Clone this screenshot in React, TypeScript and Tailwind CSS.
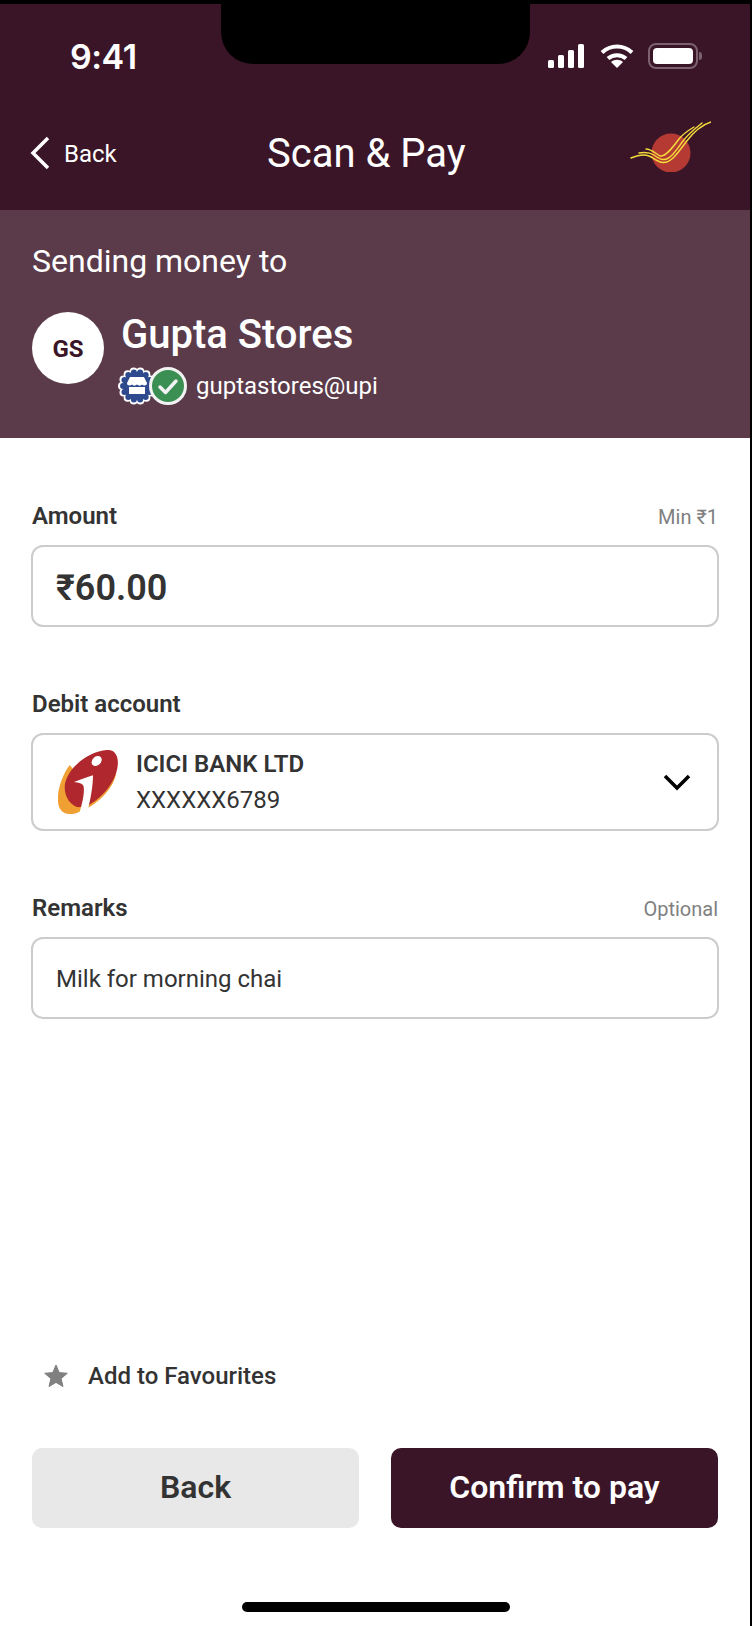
const font = { fontFamily: '"Roboto", sans-serif' }

const scallops = Array.from({ length: 14 }, (_, i) => {
    const a = (i / 14) * Math.PI * 2
    return { x: 19 + Math.cos(a) * 15, y: 19 + Math.sin(a) * 15 }
})

function StatusIcons() {
    return (
        <div className="flex items-center">
            <svg width="36" height="24" viewBox="0 0 36 24" fill="#fff">
                <rect x="0" y="16" width="6" height="8" rx="1.5" />
                <rect x="10" y="11" width="6" height="13" rx="1.5" />
                <rect x="20" y="6" width="6" height="18" rx="1.5" />
                <rect x="30" y="0" width="6" height="24" rx="1.5" />
            </svg>
            <svg className="ml-[16px]" width="34" height="24" viewBox="0 0 34 24" fill="none" stroke="#fff" strokeWidth="4">
                <path d="M2 8.5C10.5 0.5 23.5 0.5 32 8.5" />
                <path d="M8 14.5C13 10 21 10 26 14.5" />
                <path d="M17 24L11 18C14.5 15 19.5 15 23 18Z" fill="#fff" stroke="none" />
            </svg>
            <div className="ml-[14px] flex items-center">
                <div className="w-[50px] h-[26px] rounded-[8px] border-2 border-[#7c6270] p-[3px]">
                    <div className="w-full h-full rounded-[4px] bg-white"></div>
                </div>
                <div className="ml-[1px] w-[3px] h-[8px] rounded-r-full bg-[#7c6270]"></div>
            </div>
        </div>
    )
}

function IndiaPostLogo() {
    return (
        <svg width="84" height="56" viewBox="0 0 84 56" fill="none">
            <circle cx="44" cy="37" r="19.5" fill="#b53a33" />
            <g stroke="#f5dc3c" strokeWidth="1.4" strokeLinecap="round">
                <path d="M4 42C9 40 17 38 22 40C27 42 30 46 36 46.5C44 47 50 38 59 26C65 18 74 9 84 6" />
                <path d="M12 37C17 36 22 36 27 39C31 42 34 44 37 43.5C44 43 50 33 56 25C62 17 70 11 75 7" />
                <path d="M19 33C24 33 28 37 33 40C38 41 44 34 52 23C56 18 62 14 67 11" />
            </g>
        </svg>
    )
}

function IciciLogo() {
    return (
        <svg width="60" height="64" viewBox="115 90 180 192">
            <path d="M150 135C120 175 108 235 118 260C128 286 160 288 185 272L215 258C250 235 282 200 290 160L205 200Z" fill="#f0a033" />
            <path d="M262 90C284 88 298 106 294 138C288 190 240 240 205 256L178 262C155 258 135 235 135 200C138 150 200 95 262 90Z" fill="#b0282e" />
            <ellipse cx="231" cy="123" rx="17" ry="13" transform="rotate(-45 231 123)" fill="#fff" />
            <path d="M163 186C180 180 203 171 220 166C220 200 212 240 206 263L179 279C188 250 195 218 192 200C190 190 175 187 163 186Z" fill="#fff" />
        </svg>
    )
}

function StoreBadge() {
    return (
        <svg width="38" height="38" viewBox="0 0 38 38">
            {scallops.map((s, i) => <circle key={i} cx={s.x} cy={s.y} r="4" fill="#fff" />)}
            <circle cx="19" cy="19" r="15" fill="#fff" />
            {scallops.map((s, i) => <circle key={i} cx={19 + (s.x - 19) * 0.93} cy={19 + (s.y - 19) * 0.93} r="3" fill="#2e4a8e" />)}
            <circle cx="19" cy="19" r="14" fill="#2e4a8e" />
            <path d="M12 10H26L29 16C29 19 25.5 19 24 17.5C23 19 20.5 19 19 17.5C17.5 19 15 19 14 17.5C12.5 19 9 19 9 16Z" fill="#fff" />
            <path d="M11 20H27V27H11Z" fill="#fff" />
        </svg>
    )
}

function CheckBadge() {
    return (
        <svg width="38" height="38" viewBox="0 0 38 38" fill="none">
            <circle cx="19" cy="19" r="17.5" fill="#3b8f52" stroke="#f2f2f2" strokeWidth="3" />
            <path d="M11 20L16.5 25.5L27 14" stroke="#f2f2f2" strokeWidth="3.5" strokeLinecap="round" strokeLinejoin="round" />
        </svg>
    )
}

function Field({ label, hint }: { label: string; hint?: string }) {
    return (
        <div className="flex items-center justify-between h-[28px]">
            <span className="text-[24px] leading-[28px] font-semibold text-[#333333]">{label}</span>
            {hint && <span className="text-[20px] leading-[28px] pt-[2px] text-[#808080]">{hint}</span>}
        </div>
    )
}

export default function App() {
    return (
        <div className="relative w-[752px] h-[1626px] bg-black pt-[4px] pr-[2px]" style={font}>
            <div className="absolute top-0 left-[221px] w-[309px] h-[64px] bg-black rounded-b-[32px]"></div>
            <div className="h-full flex flex-col bg-white">
                <header className="h-[206px] bg-[#3a1527] text-white">
                    <div className="h-[104px] flex items-center justify-between pl-[70px] pr-[48px]">
                        <span className="text-[34px] font-semibold" style={{ fontFamily: '"Inter", sans-serif', letterSpacing: '-0.5px' }}>9:41</span>
                        <StatusIcons />
                    </div>
                    <div className="relative h-[90px] flex items-center">
                        <svg className="ml-[30px]" width="20" height="34" viewBox="0 0 20 34" fill="none" stroke="#fff" strokeWidth="3.5">
                            <path d="M18 2L3 17L18 32" />
                        </svg>
                        <span className="ml-[14px] pt-[2px] text-[24px]">Back</span>
                        <span className="flex-1 text-center pt-[2px] text-[40px] mr-[134px]">Scan &amp; Pay</span>
                        <div className="absolute right-[39px] top-[8px]">
                            <IndiaPostLogo />
                        </div>
                    </div>
                </header>

                <section className="h-[228px] bg-[#5b3b4a] px-[32px] pt-[33px] text-white">
                    <div className="text-[32px] leading-[36px]">Sending money to</div>
                    <div className="flex items-start mt-[33px]">
                        <div className="w-[72px] h-[72px] rounded-full bg-white flex items-center justify-center pt-[2px] text-[24px] font-bold text-[#3a1527]">GS</div>
                        <div className="ml-[17px] -mt-px">
                            <div className="text-[40px] leading-[48px] font-medium">Gupta Stores</div>
                            <div className="flex items-center mt-[8px] -ml-[3px]">
                                <StoreBadge />
                                <div className="-ml-[7px]"><CheckBadge /></div>
                                <span className="ml-[9px] text-[24px] leading-[28px]">guptastores@upi</span>
                            </div>
                        </div>
                    </div>
                </section>

                <main className="flex-1 flex flex-col px-[32px] pt-[64px]">
                    <Field label="Amount" hint="Min ₹1" />
                    <div className="-mx-[1px] mt-[15px] h-[82px] rounded-[12px] border-2 border-[#cccccc] flex items-center pl-[23px] pt-[3px] text-[36px] font-semibold text-[#333333]">₹60.00</div>

                    <div className="mt-[63px]"><Field label="Debit account" /></div>
                    <div className="-mx-[1px] mt-[15px] h-[98px] rounded-[12px] border-2 border-[#cccccc] flex items-center pl-[25px] pr-[26px]">
                        <IciciLogo />
                        <div className="ml-[18px] flex-1 text-[#333333]">
                            <div className="text-[24px] leading-[28px] font-semibold">ICICI BANK LTD</div>
                            <div className="mt-[8px] text-[24px] leading-[28px]">XXXXXX6789</div>
                        </div>
                        <svg width="28" height="18" viewBox="0 0 28 18" fill="none" stroke="#000" strokeWidth="3.5">
                            <path d="M2 3L14 15L26 3" />
                        </svg>
                    </div>

                    <div className="mt-[63px]"><Field label="Remarks" hint="Optional" /></div>
                    <div className="-mx-[1px] mt-[15px] h-[82px] rounded-[12px] border-2 border-[#cccccc] flex items-center pl-[23px] pt-[1px] text-[24px] text-[#333333]">Milk for morning chai</div>

                    <div className="mt-auto flex items-center pl-[12px]">
                        <svg width="24" height="24" viewBox="0 0 24 24" fill="#808080" stroke="#808080" strokeWidth="1" strokeLinejoin="round">
                            <path d="M12 1L15.2 8.6L23.3 9.3L17.1 14.6L19 22.6L12 18.4L5 22.6L6.9 14.6L0.7 9.3L8.8 8.6Z" />
                        </svg>
                        <span className="ml-[20px] text-[24px] leading-[28px] font-medium text-[#333333]">Add to Favourites</span>
                    </div>

                    <div className="mt-[58px] flex gap-[32px]">
                        <button className="flex-1 h-[80px] rounded-[10px] bg-[#e8e8e8] pb-[2px] text-[32px] font-semibold text-[#333333]">Back</button>
                        <button className="flex-1 h-[80px] rounded-[10px] bg-[#3a1527] pb-[2px] text-[32px] font-semibold text-white">Confirm to pay</button>
                    </div>

                    <div className="mt-[74px] mb-[14px] ml-[210px] w-[268px] h-[10px] rounded-full bg-black"></div>
                </main>
            </div>
        </div>
    )
}
